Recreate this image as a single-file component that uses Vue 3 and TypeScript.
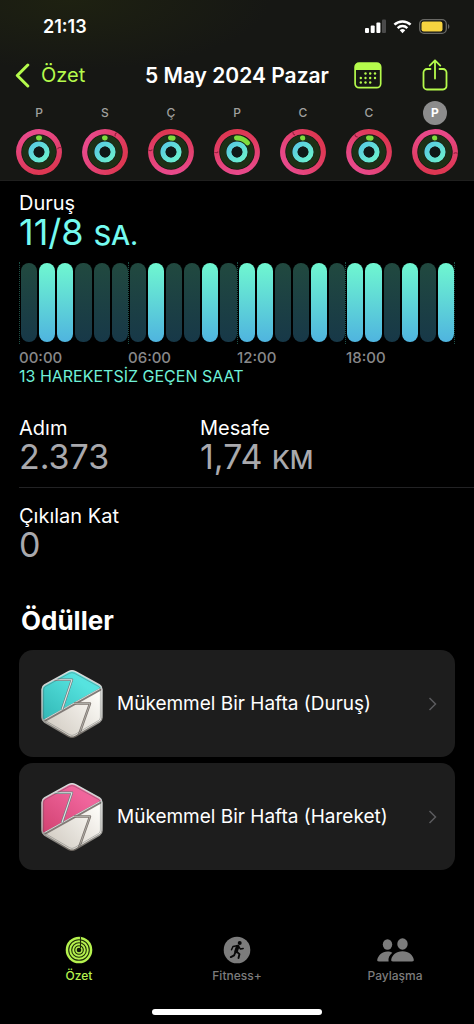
<script setup lang="ts">
interface Day {
  letter: string
  /** angle in degrees where the move ring's cap sits */
  cap: number
  /** share of the exercise ring that is closed */
  exercise: number
  selected?: boolean
}

const days: Day[] = [
  { letter: 'P', cap: 72, exercise: 0.012 },
  { letter: 'S', cap: 24, exercise: 0.008 },
  { letter: 'Ç', cap: 268, exercise: 0.03 },
  { letter: 'P', cap: 262, exercise: 0.14 },
  { letter: 'C', cap: 326, exercise: 0.003 },
  { letter: 'C', cap: 314, exercise: 0.03 },
  { letter: 'P', cap: 86, exercise: 0.003, selected: true },
]

const exerciseLength = 2 * Math.PI * 14

const activeHours = [1, 2, 7, 10, 12, 13, 16, 18, 19, 21, 23]
const hours = Array.from({ length: 24 }, (_, i) => activeHours.includes(i))
const ticks = ['00:00', '06:00', '12:00', '18:00']

const awards = [
  { id: 'stand', title: 'Mükemmel Bir Hafta (Duruş)', light: '#56e3df', dark: '#2fb5b3' },
  { id: 'move', title: 'Mükemmel Bir Hafta (Hareket)', light: '#f0659c', dark: '#cf3f6e' },
]
</script>

<template>
  <div class="screen">
    <header class="top">
      <div class="status">
        <span class="clock">21:13</span>
        <div class="indicators">
          <svg width="21" height="14" viewBox="0 0 21 14" aria-hidden="true">
            <rect x="0" y="9" width="4" height="5" rx="1" fill="#fff" />
            <rect x="5.700" y="6.500" width="4" height="7.500" rx="1" fill="#fff" />
            <rect x="11.400" y="3.500" width="4" height="10.500" rx="1" fill="#fff" />
            <rect x="17" y="0.500" width="4" height="13.500" rx="1" fill="#4a4a4a" />
          </svg>
          <svg width="19" height="15" viewBox="0 0 20 15" aria-hidden="true">
            <g fill="none" stroke="#fff" stroke-width="2.600">
              <path d="M1.500 5.600a12.200 12.200 0 0 1 17 0" />
              <path d="M4.900 9.100a7.400 7.400 0 0 1 10.200 0" />
            </g>
            <path d="M10 14.500l-2.900-3a4.200 4.200 0 0 1 5.800 0z" fill="#fff" />
          </svg>
          <svg width="31" height="15" viewBox="0 0 31 15" aria-hidden="true">
            <rect x="0.700" y="0.700" width="26.600" height="13.600" rx="4.300" fill="none" stroke="#696965" stroke-width="1.300" />
            <rect x="2.500" y="2.500" width="21" height="10" rx="2.200" fill="#f7d440" />
            <path d="M29 5v5c1.800-.7 1.800-4.300 0-5z" fill="#696965" />
          </svg>
        </div>
      </div>

      <nav class="bar" aria-label="Gezinme">
        <div class="side">
          <a class="back" href="#ozet">
            <svg width="15" height="25" viewBox="0 0 15 25" aria-hidden="true">
              <path d="M12.800 2L2.300 12.500 12.800 23" fill="none" stroke="#b5fb4c" stroke-width="3" stroke-linecap="round" stroke-linejoin="round" />
            </svg>
            <span>Özet</span>
          </a>
        </div>
        <h1>5 May 2024 Pazar</h1>
        <div class="side actions">
          <button type="button" aria-label="Takvim">
            <svg width="28" height="27" viewBox="0 0 28 27" aria-hidden="true">
              <rect x="1.100" y="1.100" width="25.600" height="24.600" rx="4" fill="none" stroke="#b5fb4c" stroke-width="1.700" />
              <path d="M1 8V5a4 4 0 0 1 4-4h18a4 4 0 0 1 4 4v3z" fill="#b5fb4c" />
              <g fill="#b5fb4c">
                <circle cx="11.500" cy="11.500" r="1.200" /><circle cx="16.200" cy="11.500" r="1.200" /><circle cx="21" cy="11.500" r="1.200" />
                <circle cx="6.800" cy="16" r="1.200" /><circle cx="11.500" cy="16" r="1.200" /><circle cx="16.200" cy="16" r="1.200" /><circle cx="21" cy="16" r="1.200" />
                <circle cx="6.800" cy="20.500" r="1.200" /><circle cx="11.500" cy="20.500" r="1.200" /><circle cx="16.200" cy="20.500" r="1.200" />
              </g>
            </svg>
          </button>
          <button type="button" aria-label="Paylaş">
            <svg width="26" height="32" viewBox="0 0 26 32" fill="none" stroke="#b5fb4c" stroke-width="1.800" stroke-linecap="round" stroke-linejoin="round" aria-hidden="true">
              <path d="M8.500 10H5a3.500 3.500 0 0 0-3.500 3.500v13.500A3.500 3.500 0 0 0 5 30.500h16a3.500 3.500 0 0 0 3.500-3.500V13.500A3.500 3.500 0 0 0 21 10h-3.500" />
              <path d="M13 19.500V1.500M7.700 6.600L13 1.300l5.300 5.300" />
            </svg>
          </button>
        </div>
      </nav>

      <div class="week">
        <button v-for="(day, i) in days" :key="i" type="button" class="day">
          <span class="letter" :class="{ selected: day.selected }">{{ day.letter }}</span>
          <svg width="46" height="46" viewBox="-23 -23 46 46" fill="none" aria-hidden="true">
            <defs>
              <linearGradient :id="'move' + i" x1="0" y1="0" x2="0" y2="1">
                <stop offset="0" stop-color="#e8498a" />
                <stop offset="1" stop-color="#dd3752" />
              </linearGradient>
              <linearGradient :id="'stand' + i" x1="0" y1="0" x2="1" y2="1">
                <stop offset="0" stop-color="#58cbe2" />
                <stop offset="1" stop-color="#6cf2cd" />
              </linearGradient>
            </defs>
            <g :transform="`rotate(${day.cap - 90})`">
              <circle r="20.300" :stroke="`url(#move${i})`" stroke-width="5.200" />
              <path d="M18.500 3q1.800-1.800 4 0" stroke="#8f1f3c" stroke-width="1" />
            </g>
            <circle r="14" stroke="#1d3016" stroke-width="6" />
            <circle
              r="14" stroke="#7fdc3d" stroke-width="5" stroke-linecap="round" transform="rotate(-92)"
              :stroke-dasharray="`${day.exercise * exerciseLength} ${exerciseLength}`"
            />
            <circle r="8" :stroke="`url(#stand${i})`" stroke-width="5.200" />
            <circle r="5.400" fill="#0f1918" />
          </svg>
        </button>
      </div>
    </header>

    <main>
      <section class="stand">
        <h2 class="label">Duruş</h2>
        <p class="value teal">11/8 <span class="unit">SA.</span></p>
        <div class="chart">
          <div v-for="(active, i) in hours" :key="i" class="hour">
            <div class="pill" :class="{ active }"></div>
          </div>
        </div>
        <div class="ticks">
          <span v-for="tick in ticks" :key="tick">{{ tick }}</span>
        </div>
        <p class="idle">13 HAREKETSİZ GEÇEN SAAT</p>
      </section>

      <section class="metrics">
        <div>
          <h2 class="label">Adım</h2>
          <p class="value">2.373</p>
        </div>
        <div>
          <h2 class="label">Mesafe</h2>
          <p class="value">1,74 <span class="unit">KM</span></p>
        </div>
      </section>
      <section class="floors">
        <h2 class="label">Çıkılan Kat</h2>
        <p class="value">0</p>
      </section>

      <section class="awards">
        <h2>Ödüller</h2>
        <a v-for="award in awards" :key="award.id" class="award" :href="'#' + award.id">
          <svg class="badge" width="64" height="70" viewBox="0 0 64 70" stroke-linejoin="round" aria-hidden="true">
            <defs>
              <linearGradient :id="award.id + '-fill'" x1="1" y1="0" x2="0" y2="1">
                <stop offset="0.300" :stop-color="award.light" />
                <stop offset="1" :stop-color="award.dark" />
              </linearGradient>
              <linearGradient :id="award.id + '-silver'" x1="1" y1="0" x2="0" y2="1">
                <stop offset="0.200" stop-color="#fffefa" />
                <stop offset="1" stop-color="#c9c2b8" />
              </linearGradient>
              <linearGradient :id="award.id + '-edge'" x1="0" y1="0" x2="0" y2="1">
                <stop offset="0" stop-color="#d9dddd" />
                <stop offset="0.650" stop-color="#b4b4b1" />
                <stop offset="1" stop-color="#69645e" />
              </linearGradient>
              <clipPath :id="award.id + '-clip'">
                <path d="M28.500 2.700Q32 .8 35.500 2.700L59.500 16q2.500 1.500 2.500 4.500v28q0 3-2.500 4.500L35.500 67.300q-3.500 2-7 0L4.500 53Q2 51.500 2 48.500v-28Q2 17.500 4.500 16z" />
              </clipPath>
            </defs>
            <g :clip-path="`url(#${award.id}-clip)`">
              <path d="M0 0h64v70H0z" :fill="`url(#${award.id}-silver)`" />
              <path d="M0 0h64v18L2 53H0z" :fill="`url(#${award.id}-fill)`" />
              <g fill="none">
                <path d="M2 53L62 19.500" stroke="#827b77" stroke-width="2.600" />
                <path d="M2 52L62 18.500" stroke="#d8e0df" stroke-width=".9" />
                <path d="M13 10.700H32L22 40.500" stroke="#6f7b7c" stroke-width="2.400" />
                <path d="M13 10.700H32L22 40.500" stroke="#dce5e4" stroke-width="1.100" />
                <path d="M34 34.500H50L38.500 67" stroke="#7d756f" stroke-width="2.400" />
                <path d="M34 34.500H50L38.500 67" stroke="#b9b7b2" stroke-width=".8" />
              </g>
            </g>
            <path d="M28.500 2.700Q32 .8 35.500 2.700L59.500 16q2.500 1.500 2.500 4.500v28q0 3-2.500 4.500L35.500 67.300q-3.500 2-7 0L4.500 53Q2 51.500 2 48.500v-28Q2 17.500 4.500 16z" fill="none" :stroke="`url(#${award.id}-edge)`" stroke-width="1.500" />
            <path d="M29.500 4.300Q32 3 34.500 4.300L58.300 17.300q2.100 1.200 2.100 3.500v27.400q0 2.300-2.100 3.500L34.500 65.700q-2.500 1.500-5 0L5.700 51.700Q3.600 50.500 3.600 48.200V20.800Q3.600 18.500 5.700 17.300z" fill="none" stroke="#4a5050" stroke-opacity=".5" stroke-width=".7" />
          </svg>
          <span class="title">{{ award.title }}</span>
          <svg width="9" height="14" viewBox="0 0 9 14" aria-hidden="true">
            <path d="M1.500 1L7.500 7l-6 6" fill="none" stroke="#5b5b5e" stroke-width="1.500" />
          </svg>
        </a>
      </section>
    </main>

    <nav class="tabs" aria-label="Sekmeler">
      <a href="#ozet" class="tab current" aria-current="page">
        <svg width="28" height="28" viewBox="-14 -14 28 28" aria-hidden="true">
          <circle r="13.300" fill="#b5f24e" />
          <g fill="none" stroke="#1c2a08" stroke-width="1.100">
            <circle r="10.300" /><circle r="7.300" /><circle r="4.300" />
            <path d="M1.500-13.300V-2" />
          </g>
          <circle r="2.300" fill="#10180a" />
        </svg>
        <span>Özet</span>
      </a>
      <a href="#fitness" class="tab">
        <svg width="28" height="28" viewBox="0 0 28 28" aria-hidden="true">
          <circle cx="14" cy="14" r="13.300" fill="#7c7c7c" />
          <circle cx="16.700" cy="6.900" r="2" fill="#080808" />
          <g fill="none" stroke="#080808" stroke-linecap="round" stroke-linejoin="round">
            <path d="M14.700 10.500l-1.700 5" stroke-width="3.600" />
            <path d="M14 9.700l-4 .8-1.500 3.200M15.500 10.500l2 2.600 2.700-.6" stroke-width="1.500" />
            <path d="M13.500 15.500l3 2.600-1 4M12.500 16l-1.400 3.400-3.300 1.700" stroke-width="1.900" />
          </g>
        </svg>
        <span>Fitness+</span>
      </a>
      <a href="#paylasma" class="tab">
        <svg width="38" height="28" viewBox="0 0 38 28" fill="#7c7c7c" aria-hidden="true">
          <ellipse cx="11.500" cy="8.500" rx="4.700" ry="5.200" />
          <path d="M3 25.500c-1.600 0-2-.8-1.700-2 .9-3.700 4.600-8 10.200-8 2 0 3.600.5 4.800 1.300-3 2.300-4.300 5.600-3.700 8.700z" />
          <ellipse cx="26.500" cy="8" rx="5.200" ry="5.800" />
          <path d="M17 25.500c-1.600 0-2-.8-1.700-2.200.7-3.800 4.700-8 11.200-8s10.500 4.200 11.200 8c.3 1.400-.1 2.200-1.700 2.200z" />
        </svg>
        <span>Paylaşma</span>
      </a>
    </nav>
    <div class="home"></div>
  </div>
</template>

<style>
html,
body {
  background: #000;
}
</style>

<style scoped>
* {
  box-sizing: border-box;
}
.screen {
  display: flex;
  flex-direction: column;
  min-height: 100vh;
  background: #000;
  color: #fff;
  font-family: Inter, "Noto Sans", sans-serif;
}
h1,
h2,
p {
  margin: 0;
  font-weight: 400;
}
svg {
  display: block;
  flex: none;
}
a {
  color: inherit;
  text-decoration: none;
}
button {
  padding: 0;
  border: 0;
  background: none;
  color: inherit;
  font: inherit;
}
.top {
  background: radial-gradient(ellipse 200px 70px at 70px 0, #1e2111, #161714);
  border-bottom: 1px solid #1f1f1e;
}
.status {
  display: flex;
  justify-content: space-between;
  align-items: center;
  height: 52px;
  padding: 0 24px 0 43px;
}
.clock {
  font-size: 18px;
  font-weight: 600;
}
.indicators {
  display: flex;
  align-items: center;
  gap: 7px;
}
.bar {
  display: flex;
  align-items: center;
  height: 46px;
}
.side {
  flex: 1 1 0;
  min-width: 0;
  padding: 0 26px 0 15px;
}
.back {
  display: flex;
  align-items: center;
  gap: 11px;
  color: #b5fb4c;
  font-size: 20px;
}
h1 {
  font-size: 21px;
  font-weight: 600;
  white-space: nowrap;
}
.actions {
  display: flex;
  justify-content: flex-end;
  align-items: center;
  gap: 40px;
}
.week {
  display: grid;
  grid-template-columns: repeat(7, 1fr);
  padding: 3px 6px 5px;
}
.day {
  display: flex;
  flex-direction: column;
  align-items: center;
  gap: 4px;
}
.letter {
  width: 24px;
  height: 24px;
  border-radius: 50%;
  color: #a0a09e;
  font-size: 12px;
  font-weight: 500;
  line-height: 24px;
  text-align: center;
}
.letter.selected {
  background: #8c8c8c;
  color: #fff;
  font-weight: 700;
}
main {
  padding: 10px 19px 0;
}
.label {
  font-size: 20px;
  line-height: 24px;
}
.value {
  color: #a9a9ad;
  font-size: 34px;
  line-height: 34px;
}
.unit {
  font-size: 26px;
  font-weight: 500;
}
.teal {
  color: #75fbf0;
  font-size: 36px;
}
.teal .unit {
  font-size: 27px;
}
.chart {
  display: grid;
  grid-template-columns: repeat(24, 1fr);
  margin-top: 9px;
  border-right: 1px dotted #1e5148;
}
.hour {
  padding: 1px 0 2px 2px;
}
.hour:nth-child(6n + 1) {
  padding-left: 1px;
  border-left: 1px dotted #1e5148;
}
.pill {
  height: 79px;
  border-radius: 8px;
  background: linear-gradient(#21493f, #173848);
}
.pill.active {
  background: linear-gradient(#6ff7d0, #4fb4df);
}
.ticks {
  display: grid;
  grid-template-columns: repeat(4, 1fr);
  margin-top: 5px;
  color: #88888a;
  font-size: 15px;
  font-weight: 500;
  line-height: 18px;
}
.idle {
  color: #6ff0d8;
  font-size: 16px;
  line-height: 18px;
}
.metrics {
  display: grid;
  grid-template-columns: 181px 1fr;
  margin-top: 31px;
  margin-right: -19px;
  padding-bottom: 10px;
  border-bottom: 1px solid #222224;
}
.floors {
  margin-top: 16px;
}
.awards {
  display: flex;
  flex-direction: column;
  gap: 6px;
  margin-top: 42px;
}
.awards h2 {
  padding: 0 2px;
  margin-bottom: 6px;
  font-size: 26px;
  font-weight: 700;
  line-height: 34px;
}
.award {
  display: flex;
  align-items: center;
  height: 107px;
  padding: 0 18px 0 21px;
  border-radius: 14px;
  background: #1d1d1d;
}
.title {
  flex: 1;
  margin-left: 13px;
  font-size: 19px;
  white-space: nowrap;
}
.tabs {
  display: grid;
  grid-template-columns: repeat(3, 1fr);
  margin-top: auto;
  padding-bottom: 25px;
}
.tab {
  display: flex;
  flex-direction: column;
  align-items: center;
  gap: 4px;
  color: #7c7c7c;
  font-size: 12px;
  font-weight: 500;
  line-height: 16px;
}
.tab.current {
  color: #b5f24e;
}
.home {
  width: 36%;
  height: 6px;
  margin: 0 auto 9px;
  border-radius: 3px;
  background: #fff;
}
</style>
